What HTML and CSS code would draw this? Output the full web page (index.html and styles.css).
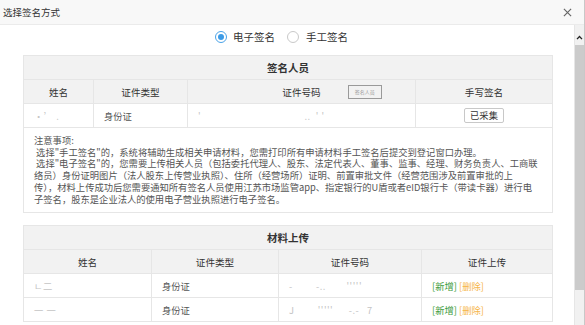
FILE: index.html
```html
<!DOCTYPE html>
<html lang="zh-CN">
<head>
<meta charset="utf-8">
<title>选择签名方式</title>
<link rel="stylesheet" href="styles.css">
</head>
<body>
<div class="dialog">
  <div class="titlebar">
    <span class="title">选择签名方式</span>
    <svg class="close" viewBox="0 0 10 10" width="9" height="9"><path d="M1 1L9 9M9 1L1 9" stroke="#666" stroke-width="1.3" fill="none"/></svg>
  </div>
  <div class="body">
    <div class="content">
      <div class="radios">
        <label class="radio on"><span class="dot"></span>电子签名</label>
        <label class="radio"><span class="dot"></span>手工签名</label>
      </div>

      <table class="grid sign">
        <colgroup><col class="c1"><col class="c2"><col class="c3"><col class="c4"></colgroup>
        <tr class="cap"><th colspan="4">签名人员</th></tr>
        <tr class="head">
          <th>姓名</th>
          <th>证件类型</th>
          <th><div class="idhead"><span></span><span>证件号码</span><span class="mini">签名人员</span></div></th>
          <th>手写签名</th>
        </tr>
        <tr class="row">
          <td><span class="redact">·&#x2019; .</span></td>
          <td>身份证</td>
          <td><span class="redact">'&nbsp;&nbsp;&nbsp;&nbsp;&nbsp;&nbsp;&nbsp;&nbsp;&nbsp;&nbsp;&nbsp;&nbsp;&nbsp;&nbsp;&nbsp;&nbsp;&nbsp;&nbsp;&nbsp;&nbsp;&nbsp;&nbsp;&nbsp;&nbsp;&nbsp;&nbsp;&nbsp;&nbsp;&nbsp;&nbsp;&nbsp;&nbsp;&nbsp;&nbsp;&nbsp;&nbsp;&nbsp;&nbsp;&nbsp;&nbsp;..&nbsp;&nbsp;' '</span></td>
          <td class="center"><button class="btn">已采集</button></td>
        </tr>
        <tr class="notes">
          <td colspan="4">注意事项:<br>&nbsp;选择"手工签名"的，系统将辅助生成相关申请材料，您需打印所有申请材料手工签名后提交到登记窗口办理。<br>&nbsp;选择"电子签名"的，您需要上传相关人员（包括委托代理人、股东、法定代表人、董事、监事、经理、财务负责人、工商联<br>络员）身份证明图片（法人股东上传营业执照）、住所（经营场所）证明、前置审批文件（经营范围涉及前置审批的上<br>传），材料上传成功后您需要通知所有签名人员使用江苏市场监管app、指定银行的U盾或者eID银行卡（带读卡器）进行电<br>子签名，股东是企业法人的使用电子营业执照进行电子签名。</td>
        </tr>
      </table>

      <table class="grid upload">
        <colgroup><col class="u1"><col class="u2"><col class="u3"><col class="u4"></colgroup>
        <tr class="cap"><th colspan="4">材料上传</th></tr>
        <tr class="head">
          <th>姓名</th>
          <th>证件类型</th>
          <th>证件号码</th>
          <th>证件上传</th>
        </tr>
        <tr class="row">
          <td><span class="redact">ㄴ二</span></td>
          <td>身份证</td>
          <td><span class="redact">-&nbsp;&nbsp;&nbsp;&nbsp;&nbsp;&nbsp;&nbsp;&nbsp;&nbsp;-..&nbsp;&nbsp;&nbsp;&nbsp;&nbsp;&nbsp;&nbsp;&nbsp;'''''</span></td>
          <td><a class="add">[新增]</a> <a class="del">[删除]</a></td>
        </tr>
        <tr class="row">
          <td><span class="redact">一 一</span></td>
          <td>身份证</td>
          <td><span class="redact">J&nbsp;&nbsp;&nbsp;&nbsp;&nbsp;&nbsp;&nbsp;&nbsp;&nbsp;'''''&nbsp;&nbsp;&nbsp;&nbsp;&nbsp;&nbsp;-.-&nbsp;&nbsp;&nbsp;7</span></td>
          <td><a class="add">[新增]</a> <a class="del">[删除]</a></td>
        </tr>
      </table>
    </div>
    <div class="scrollbar">
      <div class="arrow"><svg viewBox="0 0 8 6" width="7" height="5"><path d="M1 5L4 1.8L7 5" stroke="#222" stroke-width="1.6" fill="none"/></svg></div>
      <div class="thumb"></div>
      <div class="track"></div>
    </div>
  </div>
</div>
</body>
</html>
```

FILE: styles.css
```css
* { box-sizing: border-box; }
html, body { margin: 0; padding: 0; }
body {
  width: 585px;
  height: 325px;
  overflow: hidden;
  background: #fff;
  font-family: "Noto Sans CJK SC", "Microsoft YaHei", sans-serif;
  font-size: 9.3px;
  color: #555;
}
.dialog {
  display: flex;
  flex-direction: column;
  height: 325px;
  border-right: 1px solid #c8c8c8;
}
.titlebar {
  flex: none;
  height: 25px;
  display: flex;
  align-items: center;
  justify-content: space-between;
  padding: 0 12px 0 3px;
  background: #f8f8f8;
  border-bottom: 1px solid #ebebeb;
}
.title { font-size: 9.5px; color: #333; line-height: 24px; }
.close { display: block; }

.body { flex: 1; display: flex; min-height: 0; }
.content { flex: 1; min-width: 0; padding: 0 22px 0 23px; overflow: hidden; }

.scrollbar {
  flex: none;
  width: 10px;
  display: flex;
  flex-direction: column;
  background: #f1f1f1;
  border-left: 1px solid #e6e6e6;
}
.arrow { height: 20px; display: flex; align-items: center; justify-content: center; padding-top: 4px; }
.arrow svg { display: block; }
.thumb { height: 245px; background: #cbcbcb; }
.track { flex: 1; }

.radios {
  height: 24px;
  margin-bottom: 6px;
  display: flex;
  justify-content: center;
  align-items: center;
  gap: 12px;
  padding-right: 12px;
}
.radio {
  display: flex;
  align-items: center;
  gap: 6px;
  font-size: 10.5px;
  color: #333;
  line-height: 14px;
}
.radio + .radio { gap: 7px; }
.dot {
  width: 12px;
  height: 12px;
  border: 1px solid #c9c9c9;
  border-radius: 50%;
  background: #fff;
  display: flex;
  align-items: center;
  justify-content: center;
}
.radio.on .dot { border-color: #4aa3e8; }
.radio.on .dot::after {
  content: "";
  width: 6px;
  height: 6px;
  border-radius: 50%;
  background: #3c9be6;
}

.grid {
  width: 100%;
  border-collapse: collapse;
  table-layout: fixed;
}
.grid th, .grid td {
  border: 1px solid #e6e6e6;
  height: 24px;
  padding: 0 10px;
  line-height: 14px;
  white-space: nowrap;
  overflow: hidden;
}
.grid th {
  font-weight: normal;
  color: #333;
  background: #f2f2f2;
  text-align: center;
  font-size: 9.6px;
}
.grid .cap th { font-weight: bold; font-size: 10.5px; }
.grid td { color: #555; }
.grid td.center { text-align: center; }

.c1 { width: 70px; }
.c2 { width: 94px; }
.c3 { width: 228px; }
.c4 { width: 137px; }
.u1 { width: 128px; }
.u2 { width: 127px; }
.u3 { width: 143px; }
.u4 { width: 131px; }

.sign { margin-bottom: 12px; }

.idhead {
  display: grid;
  grid-template-columns: 1fr auto 1fr;
  align-items: center;
}
.mini {
  justify-self: start;
  margin-left: 27px;
  width: 34px;
  height: 14px;
  border: 1px solid #9a9a9a;
  font-size: 5px;
  line-height: 12px;
  color: #999;
  text-align: center;
}

.btn {
  width: 40px;
  height: 15px;
  padding: 0;
  border: 1px solid #c8c8c8;
  border-radius: 2px;
  background: #fff;
  font-family: inherit;
  font-size: 9.3px;
  line-height: 13px;
  color: #333;
}

.notes td {
  padding: 7px 10px 7px;
  line-height: 11.7px;
  color: #555;
  height: auto;
}

.redact { color: #c4c4c4; letter-spacing: 0.5px; }

.add { color: #3a9b3a; }
.del { color: #f6b54a; }
```
